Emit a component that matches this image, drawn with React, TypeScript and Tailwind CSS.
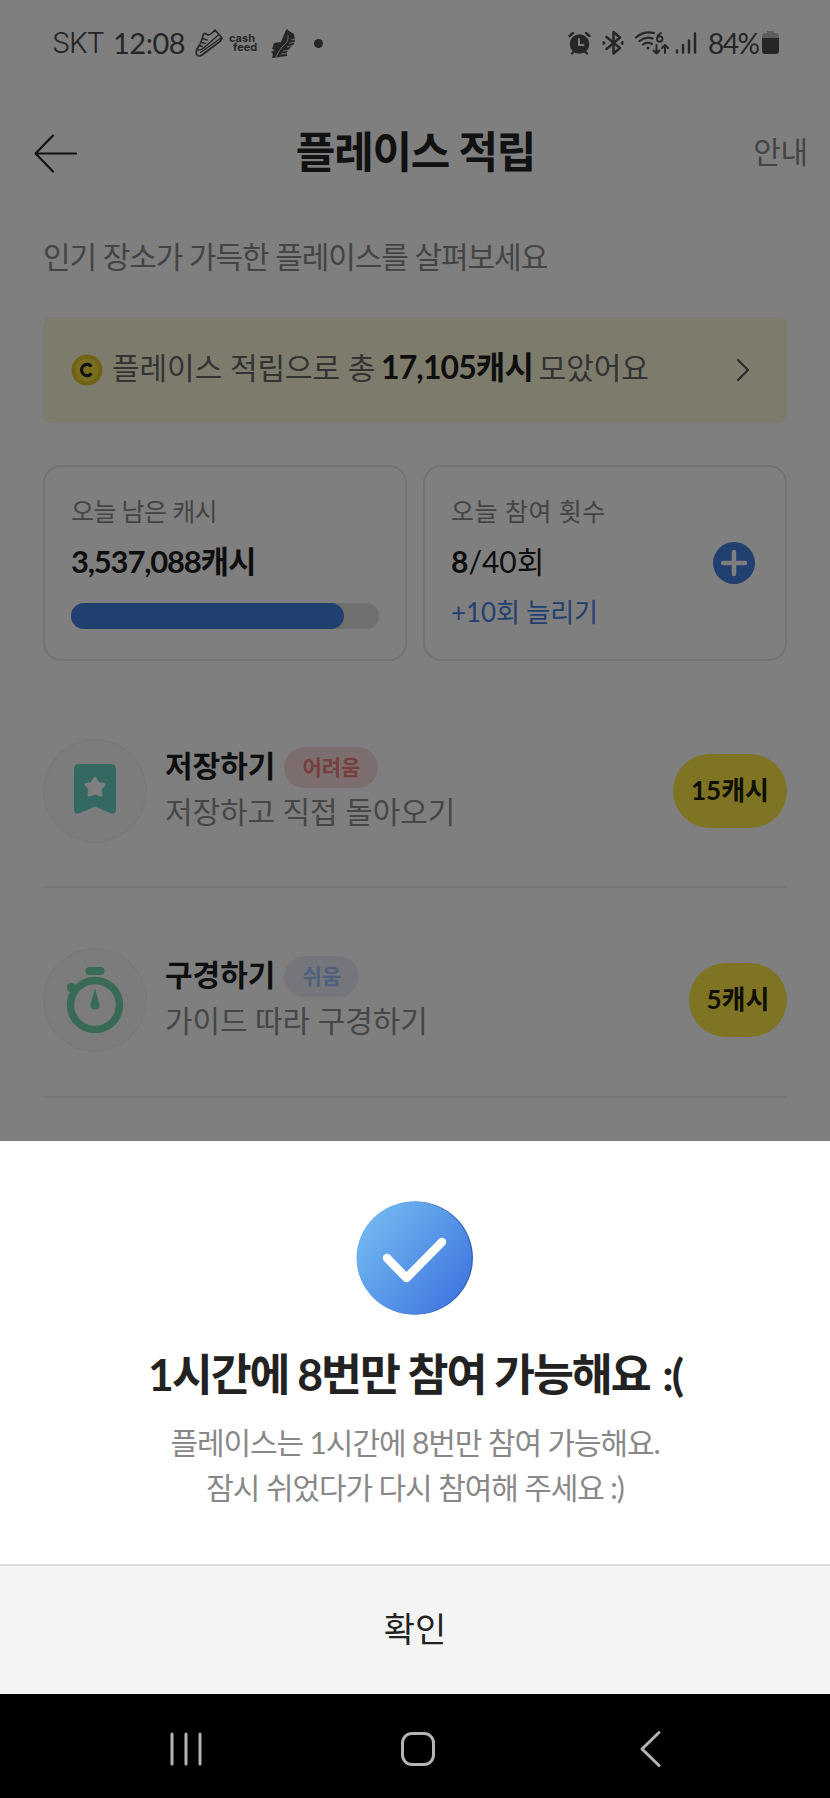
import React from 'react';

function StatusBar() {
  return (
    <div className="flex h-[86px] items-center pl-[52px] text-[#4c4c4c]">
      <span className="w-[61px] whitespace-nowrap font-['Inter',sans-serif] text-[29px] font-light leading-[40px] tracking-[-1.300px]">SKT</span>
      <span className="w-[81px] whitespace-nowrap font-['Lato',sans-serif] text-[29px] leading-[40px] tracking-[-0.5px]">12:08</span>
      <svg className="h-[30px] w-[30px]" viewBox="0 0 30 30" fill="none" stroke="currentColor" strokeWidth="1.7" strokeLinejoin="round" strokeLinecap="round">
        <path d="M9 7 Q10 4.500 12 6 Q15 8 18 5 L21 2 L28 10 L26.500 13 L8 27 Q5 29 3 27 Q1.500 25 3 21 Q8 14 9 7 Z" />
        <path d="M3 21.500 Q7 22.500 9 20.500 L25 6.500 M6.500 24.500 L27 10 M9 10.500 l4 1.500 M7 14 l4 1.500 M5 17.500 l3.500 1" strokeWidth="1.4" />
      </svg>
      <span className="ml-[6px] flex w-[33px] flex-col whitespace-nowrap font-['Inter',sans-serif] text-[11px] font-bold leading-[9px] tracking-[0px]">
        <span className="-ml-px">cash</span>
        <span className="pl-[3px]">feed</span>
      </span>
      <svg className="ml-[7px] h-[32px] w-[28px]" viewBox="0 0 28 32">
        <path d="M15 5 L17 2 L19 4 L24 7 L25 13 Q25 17 20 21 L17 25 L17 29 L2 31 L3 27 L1 25 L5 23 L2 22 L4 16 L11 15 L13 10 Z" fill="currentColor" />
        <path d="M18 8 Q19 15 13 19 Q9 23 6 30 M21 13 l4 -1 M19 16.500 l6 -1.500 M17 20 l6 -1.500 M13 24 l7 -1 M11 27 l7 -1" fill="none" stroke="#fff" strokeWidth="0.8" />
      </svg>
      <span className="ml-[16px] h-[9px] w-[9px] rounded-full bg-current" />
      <div className="ml-[245px] flex items-center">
        <svg className="h-[24px] w-[23px]" viewBox="0 0 23 24" fill="none" stroke="currentColor" strokeLinecap="round">
          <circle cx="11.500" cy="13" r="9.800" fill="currentColor" stroke="none" />
          <path d="M1.500 5 L5 2 M21.500 5 L18 2 M4 22.500 l2-2 M19 22.500 l-2-2" strokeWidth="2.400" />
          <path d="M11 8 V14 H15.500" stroke="#fff" strokeWidth="2" />
        </svg>
        <svg className="ml-[11px] h-[26px] w-[22px]" viewBox="0 0 22 26" fill="none" stroke="currentColor" strokeWidth="2.500" strokeLinejoin="round" strokeLinecap="round">
          <path d="M4.500 7 L18 18 L11.500 23.500 V2 L18 7.500 L4.500 19" />
          <path d="M1.500 12 v2 l1 -1z M20.500 12 v2 l-1 -1z" strokeWidth="2" />
        </svg>
        <svg className="ml-[10px] h-[28px] w-[36px]" viewBox="0 0 36 28" fill="none" stroke="currentColor" strokeWidth="2.200" strokeLinecap="round" strokeLinejoin="round">
          <path d="M2 8.500 Q10 1.500 20 4 M5.500 12 Q12 7 18.500 9.500 M9 15.500 Q13.500 12 18 15" />
          <circle cx="14" cy="19" r="1.500" fill="currentColor" stroke="none" />
          <path d="M27 4 Q23 6 23 10 M23 10 a2.700 2.700 0 1 0 5.400 0 a2.700 2.700 0 1 0 -5.400 0" strokeWidth="1.900" />
          <path d="M22.500 16 V24 M19.500 21.500 l3 3 l3 -3 M31 24 V16.500 M28 19 l3 -3 l3 3" strokeWidth="2" />
        </svg>
        <svg className="ml-[4px] h-[24px] w-[24px]" viewBox="0 0 24 24" stroke="currentColor" strokeWidth="2.500" strokeLinecap="round">
          <path d="M3 19.500 V21.500 M9 14 V21.500 M15 9.500 V21.500 M21 2.500 V21.500" />
        </svg>
        <span className="ml-[10px] w-[54px] whitespace-nowrap font-['Lato',sans-serif] text-[28px] leading-[40px] tracking-[-1.500px]">84%</span>
        <svg className="h-[26px] w-[17px]" viewBox="0 0 17 26">
          <path d="M5 1 h7 v2 h2 q3 0 3 3 v3 H0 V6 q0-3 3-3 h2z" fill="#bdbdbd" />
          <path d="M0 8 h17 v13 q0 3-3 3 H3 q-3 0-3-3z" fill="currentColor" />
        </svg>
      </div>
    </div>
  );
}

function SavedIcon() {
  return (
    <svg className="h-[50px] w-[42px] -translate-y-[2px]" viewBox="0 0 42 50">
      <path d="M5 0 H37 Q42 0 42 5 V45 Q42 51.500 36 49 L21 42.500 L6 49 Q0 51.500 0 45 V5 Q0 0 5 0Z" fill="#68d2c6" />
      <path d="M21 14.500 L24 19.500 L30 20.500 L26 25 L27 31 L21 29 L15 31 L16 25 L12 20.500 L18 19.500Z" fill="#fff" stroke="#fff" strokeWidth="3" strokeLinejoin="round" />
    </svg>
  );
}

function TimerIcon() {
  return (
    <svg className="h-[66px] w-[58px]" viewBox="0 0 58 66">
      <rect x="19.500" y="0" width="19" height="8" rx="4" fill="#70d5ab" />
      <rect x="1" y="16" width="9" height="9" rx="4" fill="#70d5ab" />
      <circle cx="29" cy="38" r="24.500" fill="none" stroke="#70d5ab" strokeWidth="7.500" />
      <path d="M29 21.500 L33.500 37 Q34 42.500 29 42.500 Q24 42.500 24.500 37Z" fill="#70d5ab" />
    </svg>
  );
}

interface MissionProps {
  icon: React.ReactNode;
  title: string;
  badge: string;
  badgeClass: string;
  description: string;
  reward: string;
  rewardClass: string;
}

function Mission({ icon, title, badge, badgeClass, description, reward, rewardClass }: MissionProps) {
  return (
    <div className="flex h-[104px] items-center">
      <div className="flex h-[104px] w-[104px] shrink-0 items-center justify-center rounded-full border-2 border-[#f2f2f2] bg-[#f9f9f9]">{icon}</div>
      <div className="ml-[18px] flex-1 whitespace-nowrap pb-[4px]">
        <div className="flex h-[43px] items-center">
          <span className="pb-[5px] text-[30px] font-bold leading-[42px] tracking-[0px] text-[#1c1c1c]">{title}</span>
          <span className={`ml-[9px] mt-[1px] flex h-[41px] items-center justify-center rounded-full pb-[2px] text-[21px] font-bold leading-[30px] ${badgeClass}`}>{badge}</span>
        </div>
        <div className="h-[44px] text-[30px] leading-[44px] tracking-[-0.1px] text-[#8c8c8c]">{description}</div>
      </div>
      <div className={`flex h-[74px] items-center justify-center rounded-[37px] bg-[#fce848] pb-[3px] text-[26px] font-bold leading-[36px] text-[#1c1c0a] ${rewardClass}`}>{reward}</div>
    </div>
  );
}

export default function App() {
  return (
    <div className="relative flex h-[1798px] w-[830px] flex-col overflow-hidden bg-white font-['Lato','Noto_Sans_CJK_KR',sans-serif]">
      <StatusBar />
      <header className="flex h-[134px] items-center pl-[34px] pr-[22px]">
        <svg className="h-[40px] w-[62px] translate-y-[0.5px]" viewBox="0 0 62 40" fill="none" stroke="#222" strokeWidth="2.200" strokeLinecap="round" strokeLinejoin="round">
          <path d="M19 2 L1.500 20 L19 38 M1.500 20 H42" />
        </svg>
        <h1 className="flex-1 whitespace-nowrap pb-[2px] text-center text-[43px] font-bold leading-[60px] tracking-[-1.200px] text-[#222]">플레이스 적립</h1>
        <span className="w-[73px] whitespace-nowrap pb-[5px] text-right text-[30px] leading-[44px] tracking-[-0.2px] text-[#888]">안내</span>
      </header>
      <main className="flex flex-col px-[43px]">
        <p className="mt-[14px] h-[44px] whitespace-nowrap text-[30px] leading-[44px] tracking-[-1.060px] text-[#888]">인기 장소가 가득한 플레이스를 살펴보세요</p>
        <div className="mt-[39px] flex h-[106px] items-center rounded-[8px] bg-[#fbf9d8] pl-[28px] pr-[37px]">
          <svg className="h-[32px] w-[32px]" viewBox="0 0 32 32">
            <circle cx="16" cy="16" r="13.500" fill="#f2dc40" stroke="#e0c62c" strokeWidth="4" />
            <path d="M20.500 12.500 A5.600 5.600 0 1 0 20.500 19.500" fill="none" stroke="#222" strokeWidth="3.200" />
          </svg>
          <p className="ml-[9px] flex-1 whitespace-nowrap pb-[6px] text-[30px] leading-[44px] tracking-[-0.040px] text-[#666]">
            플레이스 적립으로 총 <b className="-ml-[2px] mr-[-2px] text-[32px] tracking-[-0.9px] text-[#1c1c1c]">17,105캐시</b> 모았어요
          </p>
          <svg className="h-[24px] w-[14px]" viewBox="0 0 14 24" fill="none" stroke="#555" strokeWidth="2.200" strokeLinecap="round" strokeLinejoin="round">
            <path d="M2 2 L12 12 L2 22" />
          </svg>
        </div>
        <div className="mt-[42px] grid grid-cols-2 gap-[16px]">
          <section className="h-[196px] rounded-[18px] border-2 border-[#e4e4e4] pl-[26px] pr-[26px] pt-[26px]">
            <p className="h-[36px] whitespace-nowrap text-[25px] leading-[36px] tracking-[-0.6px] text-[#888]">오늘 남은 캐시</p>
            <p className="mt-[10px] h-[44px] whitespace-nowrap text-[31px] font-bold leading-[44px] tracking-[-1.200px] text-[#1c1c1c]">3,537,088캐시</p>
            <div className="mt-[20px] h-[26px] rounded-full bg-[#e0e0e0]">
              <div className="h-full w-[273px] rounded-full bg-[#4480de]" />
            </div>
          </section>
          <section className="flex h-[196px] items-start justify-between rounded-[18px] border-2 border-[#e4e4e4] pl-[26px] pr-[30px] pt-[26px]">
            <div className="whitespace-nowrap">
              <p className="h-[36px] text-[25px] leading-[36px] tracking-[0.5px] text-[#888]">오늘 참여 횟수</p>
              <p className="mt-[10px] h-[44px] text-[30px] leading-[44px] tracking-[0px] text-[#1c1c1c]"><b>8</b>/40회</p>
              <p className="mt-[11px] h-[36px] text-[26px] leading-[36px] tracking-[-0.1px] text-[#4480de]">+10회 늘리기</p>
            </div>
            <svg className="mt-[49px] h-[42px] w-[42px]" viewBox="0 0 42 42">
              <circle cx="21" cy="21" r="21" fill="#4480de" />
              <path d="M21 10 V32 M10 21 H32" stroke="#fff" strokeWidth="4.500" strokeLinecap="round" />
            </svg>
          </section>
        </div>
        <div className="mt-[78px] h-[149px] border-b-2 border-[#ececec]">
          <Mission icon={<SavedIcon />} title="저장하기" badge="어려움" badgeClass="w-[94px] bg-[#f8dcdc] text-[#ec7c78]" description="저장하고 직접 돌아오기" reward="15캐시" rewardClass="w-[114px]" />
        </div>
        <div className="mt-[60px] h-[150px] border-b-2 border-[#ececec]">
          <Mission icon={<TimerIcon />} title="구경하기" badge="쉬움" badgeClass="w-[75px] bg-[#eaecf8] text-[#9cc0f4]" description="가이드 따라 구경하기" reward="5캐시" rewardClass="w-[98px]" />
        </div>
      </main>

      <div className="absolute inset-0 flex flex-col">
        <div className="h-[1141px] shrink-0 bg-black/50" />
        <div role="dialog" className="flex h-[423px] shrink-0 flex-col items-center whitespace-nowrap bg-white pt-[60px]">
          <svg className="h-[114px] w-[118px]" viewBox="0 0 118 114">
            <defs>
              <linearGradient id="check" x1="0.05" y1="0.2" x2="0.9" y2="0.85">
                <stop offset="0" stopColor="#72b8f0" />
                <stop offset="1" stopColor="#4078e0" />
              </linearGradient>
            </defs>
            <ellipse cx="59.500" cy="57" rx="57.500" ry="56.500" fill="#3568b8" />
            <ellipse cx="58" cy="57" rx="57.500" ry="56.500" fill="url(#check)" />
            <path d="M31 57 L50.500 77 L86 41" fill="none" stroke="#fff" strokeWidth="8.500" strokeLinecap="round" strokeLinejoin="round" />
          </svg>
          <h2 className="mt-[27px] h-[64px] text-[44.500px] font-bold leading-[64px] tracking-[-2.060px] text-[#222]">1시간에 8번만 참여 가능해요 <span className="ml-[4px]">:(</span></h2>
          <p className="mt-[14px] text-center text-[30px] leading-[45px] tracking-[-1.090px] text-[#888]">플레이스는 1시간에 8번만 참여 가능해요.<br />잠시 쉬었다가 다시 참여해 주세요 :)</p>
        </div>
        <button className="h-[130px] shrink-0 border-t-2 border-[#dcdcdc] bg-[#f4f4f4] pb-[3px] text-[34px] leading-[48px] text-[#222]">확인</button>
        <nav className="flex flex-1 items-center bg-black pl-[169px] pt-[5px]">
          <svg className="h-[36px] w-[34px]" viewBox="0 0 34 36" stroke="#b4b4b4" strokeWidth="3" strokeLinecap="round">
            <path d="M3 3 V33 M17 3 V33 M31 3 V33" />
          </svg>
          <svg className="ml-[197px] h-[36px] w-[36px]" viewBox="0 0 36 36" fill="none" stroke="#b4b4b4" strokeWidth="3">
            <rect x="2.500" y="2.500" width="31" height="31" rx="9.500" />
          </svg>
          <svg className="ml-[203px] h-[38px] w-[23px]" viewBox="0 0 23 38" fill="none" stroke="#b4b4b4" strokeWidth="3" strokeLinecap="round" strokeLinejoin="round">
            <path d="M20 2.500 L3 19 L20 35.500" />
          </svg>
        </nav>
      </div>
    </div>
  );
}
